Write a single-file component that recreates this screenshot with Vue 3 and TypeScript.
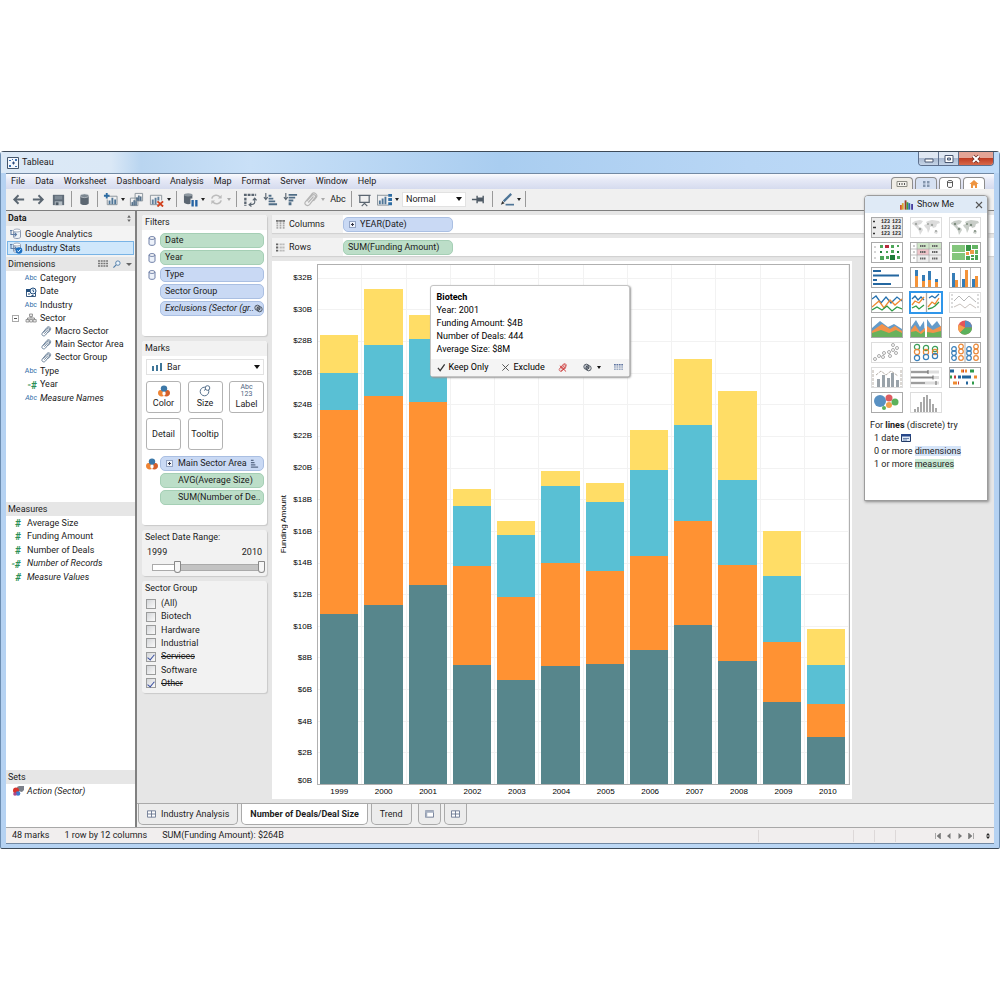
<script setup lang="ts">
import { ref } from 'vue'

interface Field {
  name: string
  icon: 'abc' | 'date' | 'tree' | 'clip' | 'num' | 'calc'
  nested?: boolean
  italic?: boolean
}

const menus = ['File', 'Data', 'Worksheet', 'Dashboard', 'Analysis', 'Map', 'Format', 'Server', 'Window', 'Help']

const dimensions: Field[] = [
  { name: 'Category', icon: 'abc' },
  { name: 'Date', icon: 'date' },
  { name: 'Industry', icon: 'abc' },
  { name: 'Sector', icon: 'tree' },
  { name: 'Macro Sector', icon: 'clip', nested: true },
  { name: 'Main Sector Area', icon: 'clip', nested: true },
  { name: 'Sector Group', icon: 'clip', nested: true },
  { name: 'Type', icon: 'abc' },
  { name: 'Year', icon: 'calc' },
  { name: 'Measure Names', icon: 'abc', italic: true },
]

const measures: Field[] = [
  { name: 'Average Size', icon: 'num' },
  { name: 'Funding Amount', icon: 'num' },
  { name: 'Number of Deals', icon: 'num' },
  { name: 'Number of Records', icon: 'calc', italic: true },
  { name: 'Measure Values', icon: 'num', italic: true },
]

const filters = [
  { name: 'Date', tone: 'green', context: true },
  { name: 'Year', tone: 'green', context: true },
  { name: 'Type', tone: 'blue', context: true },
  { name: 'Sector Group', tone: 'blue', context: false },
]

const sectors = ref([
  { name: '(All)', on: false },
  { name: 'Biotech', on: false },
  { name: 'Hardware', on: false },
  { name: 'Industrial', on: false },
  { name: 'Services', on: true },
  { name: 'Software', on: false },
  { name: 'Other', on: true },
])

const rangeStart = ref(2001.6)
const rangeEnd = ref(2010)
const markType = ref('Bar')
const fit = ref('Normal')

/* Funding in $B, stacked from top to bottom */
const axisMax = 32.79
const years: { year: number; parts: number[] }[] = [
  { year: 1999, parts: [2.4, 2.37, 12.86, 10.74] },
  { year: 2000, parts: [3.54, 3.22, 13.2, 11.31] },
  { year: 2001, parts: [1.52, 3.98, 11.56, 12.57] },
  { year: 2002, parts: [1.07, 3.79, 6.22, 7.55] },
  { year: 2003, parts: [0.88, 3.92, 5.24, 6.57] },
  { year: 2004, parts: [0.95, 4.86, 6.51, 7.45] },
  { year: 2005, parts: [1.17, 4.39, 5.84, 7.61] },
  { year: 2006, parts: [2.53, 5.43, 5.94, 8.46] },
  { year: 2007, parts: [4.17, 6.06, 6.57, 10.04] },
  { year: 2008, parts: [5.59, 5.4, 6.06, 7.77] },
  { year: 2009, parts: [2.84, 4.17, 3.79, 5.18] },
  { year: 2010, parts: [2.24, 2.5, 2.08, 2.97] },
]
const tones = ['yellow', 'cyan', 'orange', 'teal']
const ticks = Array.from({ length: 17 }, (_, i) => 32 - i * 2)
const pct = (v: number) => (v / axisMax) * 100 + '%'

const chartTypes = [
  'text table', 'symbol map', 'filled map', 'heat map', 'highlight table', 'treemap',
  'horizontal bars', 'stacked bars', 'side-by-side bars', 'lines continuous', 'lines discrete', 'dual lines',
  'area continuous', 'area discrete', 'pie', 'scatter', 'circle views', 'side-by-side circles',
  'dual combination', 'bullet graph', 'gantt', 'packed bubbles', 'histogram',
]
</script>

<template>
  <svg class="defs" aria-hidden="true">
    <symbol id="i-back" viewBox="0 0 16 16"><path d="M14 8H4M8 3.500L3.500 8L8 12.500" fill="none" stroke="#5b6671" stroke-width="2" /></symbol>
    <symbol id="i-fwd" viewBox="0 0 16 16"><path d="M2 8H12M8 3.500L12.500 8L8 12.500" fill="none" stroke="#5b6671" stroke-width="2" /></symbol>
    <symbol id="i-save" viewBox="0 0 16 16"><path d="M2 3h12v11H2z" fill="#5f6b77" /><path d="M4 4h8v4H4z" fill="#7f8b96" /><path d="M4 10h8v4H4z" fill="#b4bdc4" /><path d="M5 11h3v3H5z" fill="#4f5b66" /></symbol>
    <symbol id="i-db" viewBox="0 0 16 16"><path d="M3.500 4v8c0 2.600 9 2.600 9 0V4z" fill="#5b6671" /><ellipse cx="8" cy="4" rx="4.500" ry="2" fill="#7c8791" stroke="#d9dde0" stroke-width=".6" /></symbol>
    <symbol id="i-newsheet" viewBox="0 0 16 16"><path d="M5 4.500h10v9H4.500V8" fill="none" stroke="#8a939b" /><path d="M1 4h6M4 1v6" stroke="#2d6ca3" stroke-width="2" /><path d="M6 9h2v4H6zM9 6h2v7H9zM12 8h2v5h-2z" fill="#4e7597" /></symbol>
    <symbol id="i-dup" viewBox="0 0 16 16"><path d="M6.500 1.500h8v8h-8zM1.500 6.500h8v8h-8z" fill="#f2f2f2" stroke="#8a939b" /><path d="M8 6h1v3H8zM10 4h1v5h-1zM12 5h1v4h-1zM3 11h1v3H3zM5 9h1v5H5zM7 10h1v4H7z" fill="#3f5f7c" stroke="#3f5f7c" stroke-width=".5" /></symbol>
    <symbol id="i-clear" viewBox="0 0 16 16"><path d="M10 13.500H1.500v-10h12V9" fill="none" stroke="#8a939b" /><path d="M3 8h2v5H3zM6 6h2v7H6zM9 5h2v4H9z" fill="#5f7f9b" /><path d="M9 10l6 5.500M15 10l-6 5.500" stroke="#d0401c" stroke-width="2" /></symbol>
    <symbol id="i-dbpause" viewBox="0 0 16 16"><path d="M1 3v8c0 2.600 9 2.600 9 0V3z" fill="#5b6671" /><ellipse cx="5.500" cy="3" rx="4.500" ry="1.800" fill="#8d979f" /><path d="M8 7h8v9H8z" fill="#f0f0f0" /><path d="M9 8.500h2.500v7H9zM13 8.500h2.500v7H13z" fill="#2463a3" /></symbol>
    <symbol id="i-refresh" viewBox="0 0 16 16"><path d="M3 7c1-4 7-5 9-1M13 9c-1 4-7 5-9 1" fill="none" stroke="#bcbcbc" stroke-width="1.600" /><path d="M13.500 3v4h-4zM2.500 13V9h4z" fill="#bcbcbc" /></symbol>
    <symbol id="i-swap" viewBox="0 0 16 16"><path d="M1 3h13M2.500 6v9" stroke="#5b6671" stroke-width="2.500" stroke-dasharray="3 1" /><path d="M12.500 7v4c0 2-2 2.500-5 2.500M10.500 9l2-2.500L14.500 9M9 11.500l-2.500 2L9 15.500" fill="none" stroke="#5b6671" stroke-width="1.200" /></symbol>
    <symbol id="i-asc" viewBox="0 0 16 16"><path d="M3 1v7M1 5.500l2 2.500L5 5.500" fill="none" stroke="#5b6671" stroke-width="1.200" /><path d="M6 3h3v2H6zM6 6h5v2H6zM6 9h7v2H6zM6 12h9v2H6z" fill="#506d86" /></symbol>
    <symbol id="i-desc" viewBox="0 0 16 16"><path d="M3 1v7M1 5.500l2 2.500L5 5.500" fill="none" stroke="#5b6671" stroke-width="1.200" /><path d="M6 2h9v2H6zM6 5h7v2H6zM6 8h5v2H6zM6 11h3v3H6z" fill="#506d86" /></symbol>
    <symbol id="i-clip" viewBox="0 0 10 10"><path d="M2.500 6L6 2.200c1.500-1.200 3 .2 2 1.600L4.500 8.300C3 10 .300 8.300 1.600 6.500L6 1.200C7.500 -.2 10 1.500 9 3.500L7 6M3.500 7L7 3" fill="none" stroke="currentColor" stroke-width=".8" /></symbol>
    <symbol id="i-present" viewBox="0 0 16 16"><path d="M1.500 3.500h13M3 4v7h10V4M8 11v2M5 15l3-3 3 3" fill="none" stroke="#5b6671" stroke-width="1.300" /></symbol>
    <symbol id="i-bars" viewBox="0 0 16 16"><path d="M0 3.500h12M.5 3v11h12" fill="none" stroke="#8a939b" /><path d="M2 9h2v4H2zM5 7h2v6H5zM8 5h2v8H8z" fill="#4e7597" /><path d="M12 2h4v3h-4zM12 6.500h4v3h-4zM12 11h4v3h-4z" fill="#2d6ca3" /></symbol>
    <symbol id="i-pin" viewBox="0 0 16 16"><path d="M1 8h5M6.500 4v8M7 6.500h5v3H7zM13 4v8" stroke="#4f5b66" stroke-width="1.500" fill="#4f5b66" /></symbol>
    <symbol id="i-pen" viewBox="0 0 16 16"><path d="M5 10L13 2" stroke="#4e7597" stroke-width="2.500" /><path d="M3.500 9.500l2.500 2.500-4 1.500z" fill="#333" /><path d="M7 13.500h9" stroke="#4e7597" stroke-width="1.800" /></symbol>
    <symbol id="i-source" viewBox="0 0 14 12"><path d="M4.500 2.500v6.500c0 2 7 2 7 0V2.500" fill="#eef3f8" stroke="#8e9ab0" /><ellipse cx="8" cy="2.500" rx="3.500" ry="1.500" fill="#fff" stroke="#8e9ab0" stroke-width=".8" /><path d="M1 2.500h2.500M2 2.500v4h5M5.500 4.500l2 2-2 2" fill="none" stroke="#5f7da5" stroke-width="1.100" /></symbol>
    <symbol id="i-cyl" viewBox="0 0 8 10"><path d="M1 2v6c0 1.800 6 1.800 6 0V2" fill="#edf2fa" stroke="#6f7fa6" /><ellipse cx="4" cy="2" rx="3" ry="1.400" fill="#fff" stroke="#6f7fa6" /></symbol>
    <symbol id="i-grid" viewBox="0 0 10 8"><path d="M.5.5h9v7h-9zM5 .5v7M.5 4h9" fill="#fff" stroke="#68758e" /></symbol>
    <symbol id="i-venn" viewBox="0 0 10 10"><g fill="#c9ced6" stroke="#39424d" stroke-width=".9"><circle cx="3.800" cy="4.200" r="2.900" /><circle cx="6.200" cy="5.800" r="2.900" fill="none" /></g><path d="M3 3l4 4M4.500 3l3 3M3 5l3 3" stroke="#39424d" stroke-width=".8" /></symbol>
    <symbol id="i-table" viewBox="0 0 10 8"><path d="M0 1h10" stroke="#5f75a0" stroke-width="1.600" stroke-dasharray="2 .7" /><path d="M0 3.500h10M0 6h10" stroke="#9aa9c2" stroke-width="1.600" stroke-dasharray="2 .7" /></symbol>
    <symbol id="i-color" viewBox="0 0 12 12"><path d="M5 6.500c-2-2.500-5-1.500-5 1.500s3 4 6 3c-2-1-2-3-1-4.500z" fill="#ef8433" /><path d="M7 6.500c2-2.500 5-1.500 5 1.500s-3 4-6 3c2-1 2-3 1-4.500z" fill="#d5602a" /><circle cx="6" cy="3.600" r="3.200" fill="#3c78a8" /></symbol>
  </svg>

  <main class="window">
    <header class="titlebar">
      <svg class="logo" viewBox="0 0 12 12" aria-hidden="true"><path d="M.5.5h11v11H.5z" fill="#f4f8fd" stroke="#45566b" /><path d="M5 6h3M6.500 4.500v3" stroke="#2c4b7c" /><g fill="#3a6fb0"><path d="M2 3h2v1H2zM8 2h2v2H8zM2 8h2v2H2zM8 9h2v1H8zM5 2h1v1H5z" /></g></svg>
      <h1>Tableau</h1>
      <div class="controls">
        <button aria-label="Minimize"><svg viewBox="0 0 12 10"><path d="M2 5h8v3H2z" fill="#fff" stroke="#4b5872" /></svg></button>
        <button aria-label="Maximize"><svg viewBox="0 0 12 10"><path d="M2 1.500h8v7H2z" fill="#fff" stroke="#4b5872" /><path d="M4.500 4h3v2h-3z" fill="#bcd" stroke="#4b5872" /></svg></button>
        <button class="close" aria-label="Close"><svg viewBox="0 0 12 10"><path d="M3 2l6 6M9 2L3 8" stroke="#6d2a22" stroke-width="3.400" /><path d="M3 2l6 6M9 2L3 8" stroke="#fff" stroke-width="2" /></svg></button>
      </div>
    </header>

    <div class="client">
      <nav class="menubar">
        <button v-for="m in menus" :key="m">{{ m }}</button>
        <div class="corner-tabs">
          <button class="current" aria-label="Shelves"><svg viewBox="0 0 12 8"><path d="M1 1.500h10v5H1z" fill="#f4f2ec" stroke="#8c8c84" /><path d="M3 3h1v2H3zM5.500 3h1v2h-1zM8 3h1v2H8z" fill="#555" /></svg></button>
          <button class="blue" aria-label="Sheets"><svg viewBox="0 0 12 8"><path d="M3 1h2.500v2.500H3zM7 1h2.500v2.500H7zM3 4.500h2.500V7H3zM7 4.500h2.500V7H7z" fill="#8496ac" /></svg></button>
          <button aria-label="Data source"><svg viewBox="0 0 12 8"><path d="M3.500 1.500v5c0 1.300 5 1.300 5 0v-5" fill="#fff" stroke="#444" stroke-width=".9" /><ellipse cx="6" cy="1.600" rx="2.500" ry="1.100" fill="#fff" stroke="#444" stroke-width=".9" /></svg></button>
          <button aria-label="Home"><svg viewBox="0 0 12 8"><path d="M6 0l4.500 4H9v4H7V5.500H5V8H3V4H1.500z" fill="#ee9440" /></svg></button>
        </div>
      </nav>

      <div class="toolbar">
        <button class="tool" aria-label="Back"><svg><use href="#i-back" /></svg></button>
        <button class="tool" aria-label="Forward"><svg><use href="#i-fwd" /></svg></button>
        <button class="tool" aria-label="Save"><svg><use href="#i-save" /></svg></button>
        <i class="sep"></i>
        <button class="tool" aria-label="Connect"><svg><use href="#i-db" /></svg></button>
        <i class="sep"></i>
        <button class="tool" aria-label="New sheet"><svg><use href="#i-newsheet" /></svg></button>
        <button class="caret" aria-label="New sheet options"></button>
        <button class="tool" aria-label="Duplicate"><svg><use href="#i-dup" /></svg></button>
        <button class="tool" aria-label="Clear"><svg><use href="#i-clear" /></svg></button>
        <button class="caret" aria-label="Clear options"></button>
        <i class="sep wide"></i>
        <button class="tool" aria-label="Pause updates"><svg><use href="#i-dbpause" /></svg></button>
        <button class="caret" aria-label="Update options"></button>
        <button class="tool" aria-label="Refresh"><svg><use href="#i-refresh" /></svg></button>
        <button class="caret off" aria-label="Refresh options"></button>
        <i class="sep wide"></i>
        <button class="tool" aria-label="Swap"><svg><use href="#i-swap" /></svg></button>
        <button class="tool" aria-label="Sort ascending"><svg><use href="#i-asc" /></svg></button>
        <button class="tool" aria-label="Sort descending"><svg><use href="#i-desc" /></svg></button>
        <button class="tool faded" aria-label="Group"><svg><use href="#i-clip" /></svg></button>
        <button class="caret off" aria-label="Group options"></button>
        <button class="tool abc-tool">Abc</button>
        <i class="sep"></i>
        <button class="tool" aria-label="Presentation"><svg><use href="#i-present" /></svg></button>
        <button class="tool" aria-label="Cards"><svg><use href="#i-bars" /></svg></button>
        <button class="caret" aria-label="Card options"></button>
        <select v-model="fit" class="fit" aria-label="Fit"><option>Normal</option></select>
        <button class="tool" aria-label="Pin"><svg><use href="#i-pin" /></svg></button>
        <i class="sep wide"></i>
        <button class="tool" aria-label="Highlight"><svg><use href="#i-pen" /></svg></button>
        <button class="caret" aria-label="Highlight options"></button>
        <i class="sep"></i>
      </div>

      <div class="workspace">
        <aside class="data-pane">
          <h2 class="pane-head strong">Data<svg class="updown" viewBox="0 0 6 8"><path d="M3 0l2 3H1zM3 8l2-3H1z" fill="#666" /></svg></h2>
          <ul class="sources">
            <li><svg><use href="#i-source" /></svg>Google Analytics</li>
            <li class="selected"><svg><use href="#i-source" /><circle cx="10" cy="8.500" r="3.300" fill="#1d6fc0" /><path d="M8.500 8.500l1 1.300 2-2.500" fill="none" stroke="#fff" /></svg>Industry Stats</li>
          </ul>
          <h2 class="pane-head">Dimensions
            <span class="head-tools">
              <svg class="g" viewBox="0 0 10 8"><path d="M0 1h10M0 3.500h10M0 6h10" stroke="#777" stroke-width="1.600" stroke-dasharray="2 .7" /></svg>
              <svg class="g" viewBox="0 0 10 9"><circle cx="6" cy="3.500" r="2.500" fill="#eaf3fb" stroke="#4f7ca8" /><path d="M4 5.500L1 8.500" stroke="#4f7ca8" stroke-width="1.300" /></svg>
              <i class="tri"></i>
            </span>
          </h2>
          <ul class="fields dims">
            <li v-for="f in dimensions" :key="f.name" :class="{ nested: f.nested, italic: f.italic }">
              <i v-if="f.icon === 'tree'" class="toggle"></i>
              <span class="fi">
                <b v-if="f.icon === 'abc'" class="abc">Abc</b>
                <b v-else-if="f.icon === 'calc'" class="hash"><small>=</small>#</b>
                <svg v-else-if="f.icon === 'date'" viewBox="0 0 12 10"><path d="M1.500 2.500h9v7h-9z" fill="#fff" stroke="#3a5a80" /><path d="M1 2h6v3H1z" fill="#234e7d" /><circle cx="8" cy="4" r="3" fill="#e8f1fa" stroke="#234e7d" /><path d="M8 2.500V4l1 .8M3 7h2M6.500 8.500h2" stroke="#234e7d" fill="none" /></svg>
                <svg v-else-if="f.icon === 'tree'" viewBox="0 0 12 10"><path d="M6 3v2M2.500 7V5h7v2" fill="none" stroke="#888" /><path d="M4.500 1h3v2.500h-3zM1 6.500h3V9H1zM4.600 6.500h3V9h-3zM8.200 6.500h3V9h-3z" fill="#e7e7e7" stroke="#888" stroke-width=".8" /></svg>
                <svg v-else class="clip"><use href="#i-clip" /></svg>
              </span>
              <span>{{ f.name }}</span>
            </li>
          </ul>
          <h2 class="pane-head">Measures</h2>
          <ul class="fields meas">
            <li v-for="f in measures" :key="f.name" :class="{ italic: f.italic }">
              <span class="fi"><b class="hash"><small v-if="f.icon === 'calc'">=</small>#</b></span>
              <span>{{ f.name }}</span>
            </li>
          </ul>
          <h2 class="pane-head">Sets</h2>
          <ul class="fields sets">
            <li class="italic">
              <span class="fi"><svg viewBox="0 0 12 10"><path d="M5 1l2-1h5v4l-2 2-4-1z" fill="#7b7f88" /><circle cx="4" cy="4.500" r="3" fill="#d8332c" /><circle cx="6" cy="7.500" r="2.300" fill="#3d7bd0" /><circle cx="3" cy="8" r="1.800" fill="#a9488a" /></svg></span>
              <span>Action (Sector)</span>
            </li>
          </ul>
        </aside>

        <div class="right-side">
          <div class="sheet">
            <div class="cards">
              <section class="card filters">
                <h3>Filters</h3>
                <div v-for="f in filters" :key="f.name" class="pill-row">
                  <span class="lead"><svg v-if="f.context" class="cyl"><use href="#i-cyl" /></svg></span>
                  <button class="pill" :class="f.tone">{{ f.name }}</button>
                </div>
                <div class="pill-row">
                  <span class="lead"></span>
                  <button class="pill blue italic">Exclusions (Sector (gr..<svg class="tail"><use href="#i-venn" /></svg></button>
                </div>
              </section>

              <section class="card marks">
                <h3>Marks</h3>
                <div class="mark-type">
                  <svg viewBox="0 0 12 10" aria-hidden="true"><path d="M1 4h2v5H1zM5 3h2v6H5zM9 1h2v8H9z" fill="#3f7698" /></svg>
                  <select v-model="markType" aria-label="Mark type"><option>Bar</option></select>
                </div>
                <div class="mark-buttons">
                  <button><svg viewBox="0 0 12 12"><use href="#i-color" /></svg>Color</button>
                  <button><svg viewBox="0 0 12 12"><circle cx="5.500" cy="6.500" r="4.300" fill="#fff" stroke="#56708c" /><circle cx="8.500" cy="3" r="2.300" fill="#fff" stroke="#56708c" /><path d="M5 5.500l2-1.500" stroke="#56708c" /></svg>Size</button>
                  <button><span class="label-glyph">Abc<br />123</span>Label</button>
                  <button>Detail</button>
                  <button>Tooltip</button>
                </div>
                <div class="pill-row">
                  <span class="lead"><svg class="swirl"><use href="#i-color" /></svg></span>
                  <button class="pill blue"><i class="plus"></i>Main Sector Area<svg class="tail" viewBox="0 0 10 10"><path d="M1 1.500h3M1 4h4M1 6.500h5M1 9h8" stroke="#5a6b86" stroke-width="1.200" /></svg></button>
                </div>
                <div class="pill-row"><span class="lead"></span><button class="pill green inset">AVG(Average Size)</button></div>
                <div class="pill-row"><span class="lead"></span><button class="pill green inset">SUM(Number of De..</button></div>
              </section>

              <section class="card gray range">
                <h3>Select Date Range:</h3>
                <div class="ends"><span>1999</span><span>2010</span></div>
                <div class="slider">
                  <div class="track"></div>
                  <input v-model="rangeStart" type="range" min="1999" max="2010" step="any" aria-label="Start year" />
                  <input v-model="rangeEnd" type="range" min="1999" max="2010" step="any" aria-label="End year" />
                </div>
              </section>

              <section class="card gray groups">
                <h3>Sector Group</h3>
                <div class="checks">
                  <label v-for="s in sectors" :key="s.name"><input v-model="s.on" type="checkbox" /><span :class="{ struck: s.on }">{{ s.name }}</span></label>
                </div>
              </section>
            </div>

            <div class="view">
              <div class="shelf">
                <h3><svg viewBox="0 0 10 10"><path d="M1.500 0v10M5 0v10M8.500 0v10" stroke="#aaa" stroke-width="2" stroke-dasharray="2 .6" /><path d="M0 1h10" stroke="#777" stroke-width="2" stroke-dasharray="3 .5" /></svg>Columns</h3>
                <button class="pill blue"><i class="plus"></i>YEAR(Date)</button>
              </div>
              <div class="shelf">
                <h3><svg viewBox="0 0 10 10"><path d="M4 1.500h6M4 5h6M4 8.500h6" stroke="#bbb" stroke-width="2" stroke-dasharray="2.500 .5" /><path d="M0 1.500h2.500M0 5h2.500M0 8.500h2.500" stroke="#666" stroke-width="2" /></svg>Rows</h3>
                <button class="pill green">SUM(Funding Amount)</button>
              </div>

              <section class="chart" aria-label="Funding Amount by year">
                <div class="axis-title"><span>Funding Amount</span></div>
                <div class="y-axis"><span v-for="t in ticks" :key="t" :class="{ base: t === 0 }">${{ t }}B</span></div>
                <div class="plot-column">
                  <div class="plot">
                    <div class="gridlines"><i v-for="t in 16" :key="t" :style="{ height: pct(2) }"></i></div>
                    <div v-for="y in years" :key="y.year" class="slot">
                      <div v-for="(p, i) in y.parts" :key="i" :class="tones[i]" :style="{ height: pct(p) }"></div>
                    </div>
                    <div class="tooltip">
                      <div class="tip-body">
                        <strong>Biotech</strong>
                        <span>Year: 2001</span>
                        <span>Funding Amount: $4B</span>
                        <span>Number of Deals: 444</span>
                        <span>Average Size: $8M</span>
                      </div>
                      <div class="tip-foot">
                        <button><svg viewBox="0 0 10 10"><path d="M1 5.500L3.500 8.500L8.500 1.500" fill="none" stroke="#333" stroke-width="1.400" /></svg>Keep Only</button>
                        <button><svg viewBox="0 0 10 10"><path d="M1.500 1.500l7 7M8.500 1.500l-7 7" stroke="#444" /></svg>Exclude</button>
                        <button class="ungroup" aria-label="Ungroup"><svg viewBox="0 0 10 10"><use href="#i-clip" /><path d="M2 3l7 6.500M9 5L3 9.500" stroke="#c33" /></svg></button>
                        <button class="set" aria-label="Create set"><svg><use href="#i-venn" /></svg><i class="tri dark"></i></button>
                        <button aria-label="View data"><svg><use href="#i-table" /></svg></button>
                      </div>
                    </div>
                  </div>
                  <div class="x-axis"><span v-for="y in years" :key="y.year">{{ y.year }}</span></div>
                </div>
              </section>
            </div>

            <aside class="show-me">
              <header>
                <svg viewBox="0 0 14 10" aria-hidden="true"><path d="M0 5h2v5H0z" fill="#d2522d" /><path d="M2 3h2v7H2z" fill="#d9a62a" /><path d="M5 0h2v10H5z" fill="#a03a20" /><path d="M7 2h2v8H7z" fill="#3a9b3e" /><path d="M9 3h2v7H9z" fill="#2e64b0" /><path d="M12 4h2v6h-2z" fill="#4a3fa0" /></svg>
                <h2>Show Me</h2>
                <button aria-label="Close Show Me"><svg viewBox="0 0 8 8"><path d="M1 1l6 6M7 1L1 7" stroke="#555" stroke-width="1.100" /></svg></button>
              </header>
              <div class="gallery">
                <button v-for="(c, i) in chartTypes" :key="c" :aria-label="c" :class="{ active: i === 10, dim: [1, 2, 11, 15, 18, 19, 22].includes(i) }">
                  <svg viewBox="0 0 30 19">
                    <template v-if="i === 0">
                      <path d="M0 0h30v19H0z" fill="#ececec" /><path d="M1 3.500h2M1 9.500h3M1 15.500h2" stroke="#333" stroke-width="1.500" />
                      <g font-family="Liberation Mono, monospace" font-size="5" font-weight="700" fill="#222"><text x="9" y="5">123</text><text x="20" y="5">123</text><text x="9" y="11">123</text><text x="20" y="11">123</text><text x="9" y="17">123</text><text x="20" y="17">123</text></g>
                    </template>
                    <template v-else-if="i === 1 || i === 2">
                      <path d="M1 5l3-2 5-1 3 1-2 3-3 1 1 2 3 1 1 2-3 5-1-4-2-3-3-3-2-1zM15 4l2-1 4-1 7 1 1 2-3 1-1 3-3 1-1-2-2 1 0 2-2 4-1-4-2-2-1-2 3-1zM24 12l3 1-1 3-3-1z" :fill="i === 1 ? '#dcdcdc' : '#c9cec9'" /><g :fill="i === 1 ? '#a0a4a0' : '#7c8c7d'"><circle cx="5" cy="6" r="1.200" /><circle cx="9" cy="11" r="1.200" /><circle cx="17" cy="6" r="1" /><circle cx="21" cy="7" r="1.200" /><circle cx="25" cy="13" r="1" /></g>
                    </template>
                    <template v-else-if="i === 3">
                      <path d="M2 4h2M2 9h2M2 15h2" stroke="#aaa" /><path d="M8 2h3v3H8zM19 2h3v3h-3zM25 2h2v2h-2zM14 8h2v2h-2zM19 7h3v3h-3zM8 13h4v4H8zM14 13h3v3h-3zM25 13h3v3h-3z" fill="#4da65a" /><path d="M13 2h4v3h-4z" fill="#b52c3c" /><path d="M8 8h2v2H8zM25 8h2v2h-2zM18 12h5v5h-5z" fill="#1f7c3a" />
                    </template>
                    <template v-else-if="i === 4">
                      <path d="M6 0h24v6H6z" fill="#cfe5c8" /><path d="M6 6h12v6H6z" fill="#efc4c9" /><path d="M18 6h12v6H18zM6 12h24v7H6z" fill="#eee" /><path d="M0 6h30M0 12h30M6 0v19M18 0v19" stroke="#aaa" stroke-width=".7" /><path d="M9 3h6M21 3h6M9 9h6M21 9h6M9 15.500h6M21 15.500h6" stroke="#666" stroke-width="2.200" stroke-dasharray="1.500 .5" /><path d="M2 3h2M2 9h2M2 15h2" stroke="#999" />
                    </template>
                    <template v-else-if="i === 5">
                      <path d="M2 2h13v7H2zM2 10h13v7H2z" fill="#83c67c" /><path d="M16 2h5v6h-5z" fill="#369544" /><path d="M22 2h6v4h-6zM25 7h3v4h-3z" fill="#65b565" /><path d="M16 9h3v3h-3zM20 7h4v4h-4z" fill="#ee9a48" /><path d="M16 13h4v4h-4zM21 12h3v2h-3zM25 12h3v5h-3zM21 15h3v2h-3z" fill="#4ba454" />
                    </template>
                    <path v-else-if="i === 6" d="M1 3h8M1 7.500h26M1 12h4M1 16h18" stroke="#2467a0" stroke-width="2" />
                    <template v-else-if="i === 7"><path d="M4 2h3v10H4zM11 7h3v6h-3zM17 3h3v10h-3zM24 11h3v4h-3z" fill="#367db7" /><path d="M4 8h3v11H4zM11 13h3v6h-3zM17 12h3v7h-3zM24 14h3v5h-3z" fill="#f39339" /></template>
                    <template v-else-if="i === 8"><path d="M10.500 0v19M20.500 0v19" stroke="#bbb" /><path d="M2 5h3v14H2zM12 11h3v8h-3zM22 11h3v8h-3z" fill="#367db7" /><path d="M5 12h3v7H5zM15 2h3v17h-3zM25 8h3v11h-3z" fill="#f39339" /></template>
                    <g v-else-if="i === 9" fill="none" stroke-width="1.300"><path d="M0 6l4-3 5 7 5-6 5 6 6-6 5 4" stroke="#2470ae" /><path d="M0 14l7-6 5 7 6-8 5 5 7-6" stroke="#ef8a30" /><path d="M0 17l5-3 5 3 5-4 5 5 5-4 5 2" stroke="#2d9b45" /></g>
                    <g v-else-if="i === 10" fill="none" stroke-width="1.300"><path d="M15.500 0v19" stroke="#aaa" /><path d="M1 6l3-3 3 4 3-3 3 3M18 5l3-2 3 2 4-4" stroke="#2470ae" /><path d="M1 12l3-4 4 2 5-6M17 14l4-5 3 2 4-6" stroke="#ef8a30" /><path d="M1 15l4-2 3 3 5-4M17 16l4-1 3-2 4-4" stroke="#2d9b45" /></g>
                    <g v-else-if="i === 11" fill="none" stroke="#b7b7b7"><path d="M1 2h2M1 6h2M1 10h2M1 14h2M27 2h2M27 6h2M27 10h2M27 14h2" /><path d="M4 8l5-5 5 5 5-5 7 6" /><path d="M4 14l6-3 5 4 5-4 6 4" stroke="#c9c2bd" /></g>
                    <template v-else-if="i === 12"><path d="M0 10L8 3l8 6 6-3 8 5v8H0z" fill="#649bc9" /><path d="M0 13l10-7 8 5 5-3 7 5v6H0z" fill="#f3934b" /><path d="M0 15l9-3 8 3 7-3 6 3v4H0z" fill="#69b15c" /></template>
                    <template v-else-if="i === 13"><path d="M0 9l5-7 4 7 4-6 1 16H0zM16 1l5 7 5-5 4 6v10H16z" fill="#649bc9" /><path d="M0 12l4-5 5 7 5-4v9H0zM16 8l6 4 8-4v11H16z" fill="#f3934b" /><path d="M0 14l5-1 5 3 4-3v6H0zM16 14l6 1 8-2v6H16z" fill="#69b15c" /><path d="M15 0v19" stroke="#fff" stroke-width="2" /></template>
                    <template v-else-if="i === 14"><circle cx="15" cy="9.500" r="7" fill="#e55458" /><path d="M15 9.500V2.500a7 7 0 0 1 7 7z" fill="#578fc0" /><path d="M15 9.500h7a7 7 0 0 1-12 5z" fill="#5bb15c" /><path d="M15 9.500l-5 5a7 7 0 0 1-1-8z" fill="#f3a04e" /></template>
                    <g v-else-if="i === 15" fill="none" stroke="#aaa"><circle v-for="(p, k) in [[3, 16], [7, 13], [11, 14], [12, 10], [17, 9], [21, 7], [18, 13], [25, 5], [24, 10], [21, 2]]" :key="k" :cx="p[0]" :cy="p[1]" r="1.500" /></g>
                    <g v-else-if="i === 16" fill="none" stroke-width="1.200"><g v-for="(x, k) in [6, 15, 24]" :key="k"><circle :cx="x" :cy="4 + k" r="2.600" stroke="#3b9d58" /><circle :cx="x" :cy="9" r="2.600" stroke="#e9893a" /><circle :cx="x" :cy="15 - k" r="2.600" stroke="#3a80ba" /></g></g>
                    <g v-else-if="i === 17" fill="none" stroke-width="1.200"><path d="M15 0v19" stroke="#bbb" /><g v-for="(x, k) in [4, 11, 19, 26]" :key="k" :stroke="k % 2 ? '#e9893a' : '#3a80ba'"><circle :cx="x" :cy="k % 2 ? 3.500 : 6" r="2.300" /><circle :cx="x" :cy="k % 2 ? 8.500 : 10" r="2.300" /><circle :cx="x" cy="15" r="2.300" /></g></g>
                    <g v-else-if="i === 18" fill="none"><path d="M6.500 19v-8M11.500 19V7M16.500 19v-9M20.500 19V5M25.500 19v-7" stroke="#9aa3aa" stroke-width="3" /><path d="M4 7l5-4 5 4 5-4 7 5M1 2v17M29 2v17" stroke="#b7b0a8" stroke-dasharray="3 1" /></g>
                    <g v-else-if="i === 19"><path d="M0 4h28M0 9.500h28M0 15h28" stroke="#ddd" stroke-width="3" /><path d="M0 4h17M0 9.500h22M0 15h14" stroke="#888" stroke-width="1.400" /><path d="M17 2v4M22 7.500v4M25 13v4" stroke="#666" /></g>
                    <template v-else-if="i === 20"><path d="M0 3h4M8 9h3M12 9h9M16 15h2" stroke="#22659c" stroke-width="3" /><path d="M11 3h2M15 3h2M3 15h4M24 9h3" stroke="#ef8a30" stroke-width="3" /><path d="M20 3h4M0 9h2M22 15h2" stroke="#2f9a4b" stroke-width="3" /><path d="M13 3h1M4 9h2M8 15h1" stroke="#c53b3b" stroke-width="3" /></template>
                    <template v-else-if="i === 21"><circle cx="8" cy="8" r="6" fill="#5890c2" /><circle cx="17" cy="5" r="3.500" fill="#dd5c60" /><circle cx="17" cy="12" r="3" fill="#f2a04c" /><circle cx="23" cy="9" r="3.500" fill="#5cb25c" /><circle cx="12" cy="15" r="2" fill="#5cb25c" /></template>
                    <path v-else d="M4 19v-3M7 19v-5M10 19V9M13 19V4M16 19V2M19 19V6M22 19v-8M25 19v-4" stroke="#a9a9a9" stroke-width="2" />
                  </svg>
                </button>
              </div>
              <div class="hint">
                <p>For <b>lines</b> (discrete) try</p>
                <p>1 date <svg viewBox="0 0 10 8"><path d="M.5.5h9v7h-9z" fill="#dfe9f7" stroke="#223a66" /><path d="M0 0h10v2.500H0z" fill="#27488a" /><path d="M2 4.500h6M2 6h4" stroke="#6a83ac" /></svg></p>
                <p>0 or more <mark class="blue">dimensions</mark></p>
                <p>1 or more <mark class="green">measures</mark></p>
              </div>
            </aside>
          </div>

          <nav class="sheet-tabs">
            <button><svg><use href="#i-grid" /></svg>Industry Analysis</button>
            <button class="current">Number of Deals/Deal Size</button>
            <button>Trend</button>
            <button class="mini" aria-label="New worksheet"><svg viewBox="0 0 10 8"><path d="M.5.5h9v7h-9z" fill="#fff" stroke="#68758e" /><path d="M0 1.500h10M1.500 0v8" stroke="#a5afc0" stroke-width="2" /></svg></button>
            <button class="mini" aria-label="New dashboard"><svg><use href="#i-grid" /></svg></button>
          </nav>
        </div>
      </div>

      <footer class="status">
        <span>48 marks</span><span>1 row by 12 columns</span><span>SUM(Funding Amount): $264B</span>
        <div class="cells"><i></i><i></i><i></i><i></i></div>
        <div class="pager">
          <button aria-label="First"><svg viewBox="0 0 6 6"><path d="M.5 0v6M5.500 0v6L2 3z" fill="#777" stroke="#777" stroke-width=".6" /></svg></button>
          <button aria-label="Previous"><svg viewBox="0 0 6 6"><path d="M4.500 0v6L1 3z" fill="#777" /></svg></button>
          <button aria-label="Next"><svg viewBox="0 0 6 6"><path d="M1.500 0v6L5 3z" fill="#777" /></svg></button>
          <button aria-label="Last"><svg viewBox="0 0 6 6"><path d="M5.500 0v6M.5 0v6L4 3z" fill="#777" stroke="#777" stroke-width=".6" /></svg></button>
          <button aria-label="More"><svg viewBox="0 0 6 6"><path d="M3 0l2 2.500H1zM3 6l2-2.500H1z" fill="#222" /></svg></button>
        </div>
      </footer>
    </div>
  </main>
</template>

<style>
body {
  background: #fff;
}
</style>

<style scoped>
* {
  box-sizing: border-box;
}
.defs {
  position: absolute;
  width: 0;
  height: 0;
}
.window {
  margin-top: 151px;
  padding: 0 5px 4px;
  border: 1px solid #3d4a58;
  border-left-color: #6c8db1;
  border-right-color: #6c8db1;
  border-radius: 4px 4px 2px 2px;
  background: linear-gradient(90deg, #b5d2f2, #bdd8f5 60%, #b5d2f2);
  font-family: Roboto, 'Open Sans', sans-serif;
  font-size: 9px;
  line-height: 13px;
  color: #1c1c1c;
}
button,
select {
  margin: 0;
  padding: 0;
  border: 0;
  background: none;
  font: inherit;
  color: inherit;
}
svg {
  flex: none;
}
h1,
h2,
h3,
p,
ul {
  margin: 0;
  padding: 0;
  font-size: inherit;
  font-weight: 400;
  list-style: none;
}
.titlebar {
  display: flex;
  align-items: center;
  height: 21px;
  margin: 0 -5px;
  padding-left: 6px;
  background: linear-gradient(90deg, #dce9f6 0, #dae8f6 110px, #b9d5f0 140px, #c9e0f7 25%, #a9cdf0 50%, #b8d6f5 75%, #bfdcf9 100%);
}
.logo {
  width: 12px;
  height: 12px;
}
.titlebar h1 {
  flex: 1;
  padding-left: 3px;
}
.controls {
  display: flex;
  align-self: flex-start;
  margin-right: 5px;
  border: 1px solid #5d6f8c;
  border-top: 0;
  border-radius: 0 0 4px 4px;
  overflow: hidden;
}
.controls button {
  display: flex;
  align-items: center;
  justify-content: center;
  width: 20px;
  height: 13px;
  border-right: 1px solid #5d6f8c;
  background: linear-gradient(#dfe7f2 45%, #a9b9d0 50%, #c6d5e8);
}
.controls .close {
  width: 34px;
  border: 0;
  background: linear-gradient(#e3a496 45%, #bf3d24 50%, #d8694a);
}
.controls svg {
  width: 12px;
  height: 10px;
}
.client {
  background: #f0f0f0;
  border: 1px solid #7289a3;
  border-width: 1px 0;
}
.menubar {
  display: flex;
  gap: 10px;
  height: 15px;
  padding-left: 5px;
  background: linear-gradient(#fafbfe, #e6e9f6 40%, #d5dbee);
}
.corner-tabs {
  display: flex;
  align-items: flex-end;
  gap: 2px;
  margin-left: auto;
  margin-right: 9px;
}
.corner-tabs button {
  display: flex;
  align-items: center;
  justify-content: center;
  width: 22px;
  height: 12px;
  border: 1px solid #8d8d8d;
  border-bottom: 0;
  border-radius: 4px 4px 0 0;
  background: #fff;
}
.corner-tabs .current {
  background: #f0ede6;
}
.corner-tabs .blue {
  background: #d6e1f2;
}
.corner-tabs svg {
  width: 12px;
  height: 8px;
}
.toolbar {
  display: flex;
  align-items: center;
  height: 21px;
  padding: 0 0 1px 2px;
}
.tool {
  display: flex;
  align-items: center;
  justify-content: center;
  width: 20px;
  height: 18px;
}
.tool svg {
  width: 15px;
  height: 15px;
}
.tool.faded {
  color: #b5b5b5;
}
.abc-tool {
  margin: 0 0 0 2px;
}
.caret {
  width: 6px;
  height: 18px;
}
.caret::before {
  content: '';
  display: block;
  border: 2px solid transparent;
  border-top: 3px solid #222;
  border-bottom: 0;
  width: 0;
  margin: auto;
}
.caret.off::before {
  border-top-color: #aaa;
}
.sep {
  width: 6px;
  height: 16px;
  background: linear-gradient(#999, #999) center / 1px 100% no-repeat;
}
.sep.wide {
  width: 8px;
}
.fit {
  width: 64px;
  height: 15px;
  margin: 0 2px;
  padding-left: 3px;
  border: 1px solid #e2e2e2;
  background: #fff;
}
.fit,
.mark-type select {
  appearance: none;
  background-image: url("data:image/svg+xml,%3Csvg xmlns='http://www.w3.org/2000/svg' viewBox='0 0 6 4'%3E%3Cpath d='M0 0h6L3 4z' fill='%23111'/%3E%3C/svg%3E");
  background-position: right 3px center;
  background-size: 6px 4px;
  background-repeat: no-repeat;
}
.workspace {
  display: flex;
  border-top: 1px solid #7e7e7e;
}
.data-pane {
  display: flex;
  flex-direction: column;
  flex: none;
  width: 131px;
  border-right: 2px solid #808080;
  background: #fff;
}
.pane-head {
  display: flex;
  align-items: center;
  justify-content: space-between;
  height: 14px;
  padding: 0 3px 0 2px;
  background: #e6e6e6;
}
.pane-head.strong {
  height: 15px;
  font-weight: 700;
}
.updown {
  width: 6px;
  height: 7px;
}
.head-tools {
  display: flex;
  align-items: center;
  gap: 4px;
}
.head-tools .g {
  width: 10px;
  height: 8px;
}
.tri {
  width: 0;
  border: 3px solid transparent;
  border-top-color: #666;
  border-bottom: 0;
}
.tri.dark {
  border-width: 3px 2px 0;
  border-top-color: #111;
}
.sources {
  padding: 1px 1px 2px;
  background: #f3f3f3;
}
.sources li {
  display: flex;
  align-items: center;
  gap: 2px;
  height: 14px;
  padding: 0 2px;
}
.sources li svg {
  width: 14px;
  height: 12px;
}
.sources .selected {
  padding: 0 1px;
  border: 1px solid #79b4e6;
  background: #cfe7fb;
}
.fields {
  display: flex;
  flex-direction: column;
}
.fields li {
  display: flex;
  flex: 1;
  align-items: center;
  padding-left: 19px;
}
.dims {
  height: 133px;
  margin: 1px 0 97px;
}
.meas {
  height: 67px;
  margin: 1px 0 186px;
}
.sets {
  height: 14px;
}
.meas li,
.sets li {
  padding-left: 6px;
}
.dims .nested {
  padding-left: 34px;
}
.fi {
  display: flex;
  justify-content: flex-end;
  width: 12px;
  margin-right: 3px;
}
.meas .fi {
  justify-content: center;
}
.meas .fi small {
  margin-left: -4px;
}
.fi svg {
  width: 12px;
  height: 10px;
}
.fi .clip {
  height: 11px;
  color: #5d7590;
}
.abc {
  font-size: 7px;
  font-weight: 400;
  color: #2e6ca8;
}
.hash {
  font-size: 10px;
  color: #2a8f55;
}
.hash small {
  font-size: 6px;
  vertical-align: 2px;
}
.toggle {
  width: 7px;
  height: 7px;
  margin: 0 6px 0 -13px;
  border: 1px solid #aaa;
  background: linear-gradient(#555, #555) center / 3px 1px no-repeat;
}
.italic {
  font-style: italic;
}
.right-side {
  display: flex;
  flex: 1;
  flex-direction: column;
  min-width: 0;
}
.sheet {
  position: relative;
  display: flex;
  gap: 5px;
  padding: 4px 0 4px 5px;
  background: #e6e6e6;
}
.cards {
  display: flex;
  flex: none;
  flex-direction: column;
  gap: 5px;
  width: 125px;
}
.card {
  padding: 0 3px 0 4px;
  border-radius: 3px;
  background: #fff;
  box-shadow: 1px 1px 1px #c9c9c9;
}
.card h3 {
  height: 15px;
  margin: 0 -3px 2px -4px;
  padding: 1px 3px 0;
  border-radius: 3px 3px 0 0;
  background: #f2f2f2;
}
.card.gray {
  background: #f2f2f2;
}
.filters {
  height: 121px;
}
.marks {
  height: 184px;
}
.pill-row {
  display: flex;
  align-items: center;
  height: 17px;
}
.lead {
  width: 14px;
}
.cyl {
  display: block;
  width: 8px;
  height: 10px;
  margin-left: 2px;
}
.swirl {
  display: block;
  width: 12px;
  height: 12px;
}
.pill {
  display: flex;
  flex: 1;
  align-items: center;
  height: 15px;
  min-width: 0;
  padding: 0 4px;
  border: 1px solid;
  border-radius: 5px;
  text-align: left;
  white-space: nowrap;
}
.pill.green {
  border-color: #a5cfb5;
  background: #bcdec8;
}
.pill.blue {
  border-color: #aabfe2;
  background: #c9d9f4;
}
.pill.inset {
  padding-left: 17px;
}
.tail {
  width: 9px;
  height: 9px;
  margin-left: auto;
}
.plus {
  flex: none;
  width: 7px;
  height: 7px;
  margin: 0 5px 0 1px;
  border: 1px solid #93a4c4;
  background:
    linear-gradient(#334, #334) center / 3px 1px no-repeat,
    linear-gradient(#334, #334) center / 1px 3px no-repeat,
    #eef3fb;
}
.mark-type {
  display: flex;
  align-items: center;
  height: 16px;
  margin-top: 3px;
  padding-left: 4px;
  border: 1px solid #e2e2e2;
}
.mark-type svg {
  width: 12px;
  height: 10px;
}
.mark-type select {
  flex: 1;
  padding-left: 4px;
}
.mark-buttons {
  display: grid;
  grid-template-columns: repeat(3, 35px);
  justify-content: space-between;
  gap: 5px;
  margin: 6px 0 5px;
}
.mark-buttons button {
  display: flex;
  flex-direction: column;
  align-items: center;
  justify-content: center;
  height: 32px;
  border: 1px solid #b3b3b3;
  border-radius: 3px;
  background: #fff;
}
.mark-buttons svg {
  width: 12px;
  height: 12px;
}
.label-glyph {
  font-size: 7px;
  line-height: 7px;
  color: #4d6480;
}
.card.gray h3 {
  margin-bottom: 1px;
  background: none;
}
.range {
  height: 46px;
}
.ends {
  display: flex;
  justify-content: space-between;
  height: 14px;
  padding: 0 2px 0 1px;
}
.slider {
  position: relative;
  height: 14px;
  padding: 4px 4px 0 6px;
}
.track {
  height: 7px;
  border: 1px solid #aaa;
  background: linear-gradient(90deg, #fff 24%, #c3c3c3 24%);
}
.slider input {
  position: absolute;
  inset: 0 -1px 0 2px;
  width: calc(100% - 1px);
  height: 14px;
  margin: 0;
  appearance: none;
  background: none;
  pointer-events: none;
}
.slider input::-webkit-slider-thumb {
  appearance: none;
  width: 7px;
  height: 12px;
  border: 1px solid #888;
  border-radius: 1px 1px 4px 4px;
  background: #f6f6f6;
  pointer-events: auto;
}
.groups {
  height: 112px;
}
.checks {
  display: flex;
  flex-direction: column;
  height: 93px;
}
.checks label {
  display: flex;
  flex: 1;
  align-items: center;
  gap: 5px;
}
.checks input {
  display: flex;
  align-items: center;
  justify-content: center;
  width: 10px;
  height: 10px;
  margin: 0;
  appearance: none;
  border: 1px solid #9b9c9c;
  background: linear-gradient(135deg, #d4d6d9, #fafafa);
}
.checks input:checked::after {
  content: '';
  width: 3px;
  height: 6px;
  border: solid #3a4f9f;
  border-width: 0 1px 1px 0;
  transform: rotate(40deg);
}
.struck {
  text-decoration: line-through;
}
.view {
  flex: 1;
  min-width: 0;
}
.shelf {
  display: flex;
  align-items: center;
  height: 18px;
  margin-bottom: 5px;
  background: #fff;
  box-shadow: 0 1px 1px #d2d2d2;
}
.shelf h3 {
  display: flex;
  align-items: center;
  gap: 4px;
  width: 71px;
  height: 18px;
  padding-left: 4px;
  background: #f2f2f2;
}
.shelf h3 svg {
  width: 9px;
  height: 9px;
}
.shelf .pill {
  flex: none;
  width: 110px;
}
.shelf .plus {
  margin-right: 4px;
}
.chart {
  display: flex;
  margin-right: 142px;
  padding: 3px 2px 0 6px;
  background: #fff;
  font-family: 'Liberation Sans', Arial, sans-serif;
  font-size: 8px;
  line-height: 12px;
  color: #000;
}
.axis-title {
  display: flex;
  align-items: center;
  justify-content: center;
  padding-bottom: 14px;
}
.axis-title span {
  writing-mode: vertical-rl;
  transform: rotate(180deg);
}
.y-axis {
  display: flex;
  flex-direction: column;
  justify-content: space-between;
  width: 22px;
  margin: 8px 5px 8px 0;
  text-align: right;
}
.y-axis span {
  height: 12px;
}
.y-axis .base {
  line-height: 4px;
}
.plot-column {
  flex: 1;
}
.plot {
  position: relative;
  display: flex;
  height: 521px;
  border: 1px solid #b0b0b0;
}
.gridlines {
  position: absolute;
  inset: 0;
  display: flex;
  flex-direction: column-reverse;
}
.gridlines i {
  border-top: 1px solid #f2f2f2;
}
.slot {
  display: flex;
  flex: 1;
  flex-direction: column;
  justify-content: flex-end;
  padding: 0 3px 0 2px;
  border-right: 1px solid #f2f2f2;
}
.slot div {
  position: relative;
}
.yellow {
  background: #ffdd66;
}
.cyan {
  background: #59c0d4;
}
.orange {
  background: #ff9233;
}
.teal {
  background: #57868c;
}
.x-axis {
  display: flex;
  height: 14px;
  line-height: 14px;
}
.x-axis span {
  flex: 1;
  text-align: center;
}
.tooltip {
  position: absolute;
  top: 20px;
  left: 21%;
  width: 200px;
  border: 1px solid #c4c4c4;
  border-radius: 3px;
  background: #fff;
  box-shadow: 1px 1px 2px #999;
  font-family: Roboto, 'Open Sans', sans-serif;
  font-size: 9px;
  line-height: 13px;
}
.tip-body {
  display: flex;
  flex-direction: column;
  padding: 5px 6px 3px;
}
.tip-foot {
  display: flex;
  align-items: center;
  gap: 13px;
  height: 17px;
  padding: 0 6px;
  background: #f4f4f4;
}
.tip-foot button {
  display: flex;
  flex: none;
  align-items: center;
  gap: 3px;
  white-space: nowrap;
}
.tip-foot svg {
  width: 9px;
  height: 9px;
}
.tip-foot .ungroup {
  margin-right: auto;
  color: #c33;
}
.tip-foot .set {
  gap: 5px;
}
.show-me {
  position: absolute;
  top: -16px;
  right: 6px;
  width: 124px;
  height: 306px;
  border: 1px solid #9c9c9c;
  border-radius: 4px 4px 0 0;
  background: #fff;
  box-shadow: 1px 1px 3px #888;
}
.show-me header {
  display: flex;
  align-items: center;
  height: 17px;
  padding: 0 4px 0 35px;
  border-radius: 3px 3px 0 0;
  background: #dfeaf6;
}
.show-me header svg {
  width: 13px;
  height: 10px;
}
.show-me h2 {
  flex: 1;
  padding-left: 4px;
}
.show-me header button {
  display: flex;
}
.show-me header button svg {
  width: 8px;
  height: 8px;
}
.gallery {
  display: grid;
  grid-template-columns: repeat(3, 32px);
  gap: 4px 7px;
  padding: 4px 6px 6px;
}
.gallery button {
  height: 21px;
  border: 1px solid #aaa;
  background: #fff;
}
.gallery .dim {
  border-color: #ddd;
}
.gallery .active {
  border-color: #2f96ea;
  outline: 1px solid #2f96ea;
}
.gallery svg {
  display: block;
  width: 30px;
  height: 19px;
}
.hint {
  padding-left: 5px;
}
.hint p + p {
  padding-left: 4px;
}
.hint svg {
  width: 10px;
  height: 8px;
  vertical-align: -1px;
}
.hint mark {
  color: inherit;
}
.hint .blue {
  background: #d5e4f8;
}
.hint .green {
  background: #c9ead4;
}
.sheet-tabs {
  display: flex;
  gap: 3px;
  height: 24px;
  padding-left: 1px;
  border-top: 1px solid #aaa;
}
.sheet-tabs button {
  display: flex;
  align-items: center;
  gap: 5px;
  height: 21px;
  padding: 0 8px;
  border: 1px solid #aaa;
  border-top: 0;
  border-radius: 0 0 5px 5px;
  background: #ececec;
}
.sheet-tabs .current {
  background: #fff;
  font-weight: 700;
}
.sheet-tabs .mini {
  width: 23px;
  padding: 0 6px;
}
.sheet-tabs .mini:nth-child(4) {
  margin-left: 3px;
}
.sheet-tabs svg {
  width: 9px;
  height: 8px;
}
.status {
  display: flex;
  align-items: center;
  gap: 15px;
  height: 16px;
  padding-left: 6px;
  border-top: 1px solid #a8a8a8;
  background: #f1eeee;
}
.cells {
  display: flex;
  gap: 20px;
  margin-left: auto;
}
.cells i {
  width: 1px;
  height: 12px;
  background: #ddd8d8;
}
.cells i:first-child {
  margin-right: 74px;
}
.pager {
  display: flex;
  gap: 5px;
  margin-left: 24px;
  padding-right: 3px;
}
.pager button {
  display: flex;
}
.pager svg {
  width: 6px;
  height: 6px;
}
.pager button:last-child {
  margin-left: 6px;
}
</style>
